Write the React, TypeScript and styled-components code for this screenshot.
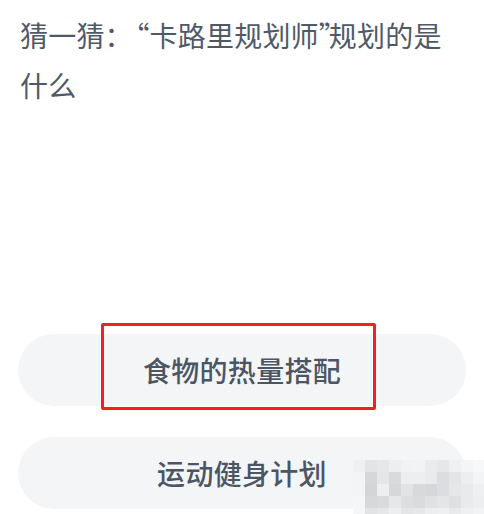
import React from 'react';
import styled, {createGlobalStyle} from 'styled-components';

const GlobalStyle = createGlobalStyle`
    html, body {
        margin: 0;
        padding: 0;
        background: #fff;
    }
    body {
        font-family: "Noto Sans CJK SC", "Noto Sans", sans-serif;
    }
`;

const Page = styled.div`
    position: relative;
    width: 484px;
    height: 514px;
    overflow: hidden;
    background: #fff;
`;

const Question = styled.div`
    padding: 10px 24px 0 20px;
    font-size: 28px;
    letter-spacing: 0.2px;
    line-height: 50px;
    color: #4f5a69;
`;

/* Punctuation cell, squeezed like the app's own text engine does */
const Punct = styled.span<{ $w: number; $align?: 'left' | 'right' }>`
    display: inline-block;
    width: ${({$w}) => $w}px;
    text-align: ${({$align}) => $align || 'left'};
    white-space: nowrap;
    letter-spacing: 0;
`;

const Options = styled.div`
    display: flex;
    flex-direction: column;
    gap: 31px;
    margin-top: 224px;
    padding: 0 18px;
`;

const Option = styled.div`
    position: relative;
    height: 72px;
    border-radius: 36px;
    background: #f4f5f7;
    display: flex;
    align-items: center;
    justify-content: center;
    font-size: 28px;
    letter-spacing: 0.3px;
    font-weight: 500;
    color: #4b5564;
`;

/* Red highlight drawn over the right answer */
const Highlight = styled.div`
    position: absolute;
    left: 83px;
    top: -11px;
    width: 275px;
    height: 87px;
    box-sizing: border-box;
    border: 3px solid #f2211b;
    border-radius: 2px;
`;

/* Pixelated watermark in the corner */
const Mosaic = styled.div`
    position: absolute;
    left: 353px;
    top: 460px;
    display: grid;
    grid-template-columns: repeat(11, 12px);
    grid-auto-rows: 12px;
`;

const Cell = styled.div<{ $shade: string }>`
    background: ${({$shade}) => $shade};
`;

const mosaic = [
    ['#eef0f2', '#e3e4e6', '#e6e7e9', '#eceef0', '#f1f2f4', '#f2f3f5', '#eaebed', '#e6e7e9', '#eef0f2', '#f4f5f7', '#f7f8f9'],
    ['#f3f4f6', '#d6d7d9', '#e5e6e8', '#d9dadc', '#edeef0', '#eceef0', '#e9eaec', '#dcdde0', '#e4e5e7', '#eceef0', '#f3f4f6'],
    ['#f3f4f6', '#d4d5d7', '#eeeff1', '#d6d7d9', '#e2e3e5', '#d8d9db', '#d6d7d9', '#dcdde0', '#e6e7e9', '#e9eaec', '#eef0f2'],
    ['#f5f6f7', '#d7d8da', '#d9dadc', '#e6e7e9', '#dddee0', '#dadbdd', '#e0e1e3', '#e4e5e7', '#dfe0e2', '#e9eaec', '#eceef0'],
    ['#f5f6f7', '#e2e3e5', '#e6e7e9', '#eceef0', '#e4e5e7', '#e7e8ea', '#eceef0', '#eef0f2', '#e9eaec', '#eef0f2', '#f2f3f5'],
];

const App: React.FC = () => {
    return (
        <>
            <GlobalStyle/>
            <Page>
                <Question>
                    猜一猜<Punct $w={17}>：</Punct><Punct $w={28} $align="right">“</Punct>卡路里规划师<Punct $w={10}>”</Punct>规划的是什么
                </Question>
                <Options>
                    <Option>
                        食物的热量搭配
                        <Highlight/>
                    </Option>
                    <Option>运动健身计划</Option>
                </Options>
                <Mosaic>
                    {mosaic.flatMap((row, r) =>
                        row.map((shade, c) => <Cell key={`${r}-${c}`} $shade={shade}/>)
                    )}
                </Mosaic>
            </Page>
        </>
    );
};

export default App;
